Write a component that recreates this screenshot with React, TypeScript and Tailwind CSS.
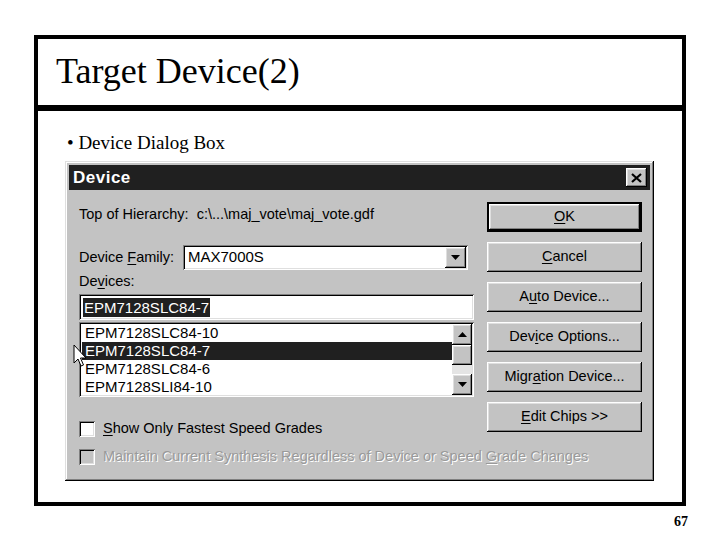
import React from "react";

const raised =
  "shadow-[inset_-1px_-1px_0_#000,inset_1px_1px_0_#fff,inset_-2px_-2px_0_#808080,inset_2px_2px_0_#dfdfdf]";
const sunken =
  "shadow-[inset_1px_1px_0_#808080,inset_-1px_-1px_0_#fff,inset_2px_2px_0_#000,inset_-2px_-2px_0_#dfdfdf]";

function Btn({ children, def }: { children: React.ReactNode; def?: boolean }) {
  return (
    <div
      className={`h-[30px] w-full flex items-center justify-center bg-[#c3c3c3] text-black ${def ? "border-2 border-black" : ""}`}
    >
      <div className={`w-full h-full flex items-center justify-center whitespace-nowrap ${raised}`}>{children}</div>
    </div>
  );
}

function U({ children }: { children: React.ReactNode }) {
  return <span className="underline underline-offset-2">{children}</span>;
}

function ArrowDown() {
  return (
    <svg width="9" height="5" viewBox="0 0 9 5">
      <polygon points="0,0 9,0 4.5,5" fill="#000" />
    </svg>
  );
}
function ArrowUp() {
  return (
    <svg width="9" height="5" viewBox="0 0 9 5">
      <polygon points="0,5 9,5 4.5,0" fill="#000" />
    </svg>
  );
}

function Checkbox({ disabled }: { disabled?: boolean }) {
  return (
    <div className={`w-[16px] h-[16px] shrink-0 ${disabled ? "bg-[#c3c3c3]" : "bg-white"} ${sunken}`} />
  );
}

export default function App() {
  const items = ["EPM7128SLC84-10", "EPM7128SLC84-7", "EPM7128SLC84-6", "EPM7128SLI84-10"];
  return (
    <div className="w-[720px] h-[540px] bg-white overflow-hidden relative" style={{ fontFamily: "'Liberation Serif', 'Times New Roman', serif" }}>
      <div className="ml-[34px] mt-[35px] w-[652px] h-[471px] border-4 border-black flex flex-col">
        <div className="h-[72px] border-b-[6px] border-black flex items-center pl-[18px] pb-[3px]">
          <span className="text-[36px] leading-none text-black">Target Device(2)</span>
        </div>
        <div className="flex-1 flex flex-col">
          <div className="pt-[21px] pl-[29px] text-[19px] leading-[22px] text-black">• Device Dialog Box</div>
          <div
            className="relative mt-[7px] ml-[27px] w-[589px] h-[320px] bg-[#c3c3c3] p-[4px] shadow-[inset_-1px_-1px_0_#000,inset_1px_1px_0_#dfdfdf,inset_-2px_-2px_0_#808080,inset_2px_2px_0_#fff] text-[14.5px] text-black whitespace-nowrap"
            style={{ fontFamily: "'Liberation Sans', Arial, sans-serif" }}
          >
            {/* title bar */}
            <div className="h-[25px] bg-[#202020] flex items-center justify-between pl-[4px] pr-[3px]">
              <span className="text-white font-bold text-[17px] leading-none tracking-[0.5px]">Device</span>
              <div className={`w-[21px] h-[19px] bg-[#c3c3c3] flex items-center justify-center ${raised}`}>
                <svg width="11" height="10" viewBox="0 0 11 10">
                  <path d="M1 1 L10 9 M10 1 L1 9" stroke="#000" strokeWidth="2.2" />
                </svg>
              </div>
            </div>
            {/* body */}
            <div className="flex pl-[10px] pr-[8px]">
              <div className="w-[395px] flex flex-col">
                <div className="h-[50px] flex items-center">
                  <span>Top of Hierarchy:&nbsp; c:\...\maj_vote\maj_vote.gdf</span>
                </div>
                <div className="mt-[5px] h-[25px] flex items-center">
                  <span className="w-[104px] shrink-0">Device <U>F</U>amily:</span>
                  <div className={`w-[285px] h-[25px] bg-white flex items-center justify-between pl-[5px] pr-[2px] ${sunken}`}>
                    <span className="text-[15px]">MAX7000S</span>
                    <div className={`w-[21px] h-[21px] bg-[#c3c3c3] flex items-center justify-center ${raised}`}>
                      <ArrowDown />
                    </div>
                  </div>
                </div>
                <div className="h-[24px] flex items-center">
                  <span>De<U>v</U>ices:</span>
                </div>
                <div className={`h-[26px] bg-white flex items-center pl-[4px] ${sunken}`}>
                  <span className="bg-[#202020] text-white text-[15px] leading-[19px] px-[1px]">EPM7128SLC84-7</span>
                </div>
                <div className={`mt-[2px] h-[75px] bg-white p-[2px] flex ${sunken}`}>
                  <div className="flex-1 flex flex-col pl-[1px]">
                    {items.map((it, i) => (
                      <div
                        key={it}
                        className={`h-[18px] flex items-center pl-[3px] text-[15px] leading-none ${i === 1 ? "bg-[#202020] text-white" : "text-black"}`}
                      >
                        {it}
                      </div>
                    ))}
                  </div>
                  <div className="w-[20px] flex flex-col bg-[#e4e4e4]">
                    <div className={`h-[21px] bg-[#c3c3c3] flex items-center justify-center ${raised}`}>
                      <ArrowUp />
                    </div>
                    <div className={`h-[20px] bg-[#c3c3c3] ${raised}`} />
                    <div className="flex-1" />
                    <div className={`h-[21px] bg-[#c3c3c3] flex items-center justify-center ${raised}`}>
                      <ArrowDown />
                    </div>
                  </div>
                </div>
                <div className="mt-[24px] h-[16px] flex items-center gap-[8px]">
                  <Checkbox />
                  <span><U>S</U>how Only Fastest Speed Grades</span>
                </div>
              </div>
              <div className="ml-[13px] w-[155px] flex flex-col gap-[10px] pt-[12px]">
                <Btn def>
                  <span><U>O</U>K</span>
                </Btn>
                <Btn>
                  <span><U>C</U>ancel</span>
                </Btn>
                <Btn>
                  <span>A<U>u</U>to Device...</span>
                </Btn>
                <Btn>
                  <span>Dev<U>i</U>ce Options...</span>
                </Btn>
                <Btn>
                  <span>Migr<U>a</U>tion Device...</span>
                </Btn>
                <Btn>
                  <span><U>E</U>dit Chips &gt;&gt;</span>
                </Btn>
              </div>
            </div>
            <div className="mt-[12px] pl-[10px] h-[16px] flex items-center gap-[8px]">
              <Checkbox disabled />
              <span className="text-[#9a9a9a] [text-shadow:1px_1px_0_#fff]">
                Maintain Current Synthesis Regardless of Device or Speed <U>G</U>rade Changes
              </span>
            </div>
            {/* mouse cursor */}
            <svg className="absolute left-[8px] top-[183px]" width="14" height="24" viewBox="0 0 14 24">
              <path d="M1 1 L1 19 L5 15 L8 22 L10.5 21 L7.5 14 L13 14 Z" fill="#fff" stroke="#000" strokeWidth="1" />
            </svg>
          </div>
        </div>
      </div>
      <div className="w-[720px] flex justify-end pr-[32px] mt-[9px]">
        <span className="text-[14px] leading-none font-bold text-black">67</span>
      </div>
    </div>
  );
}
